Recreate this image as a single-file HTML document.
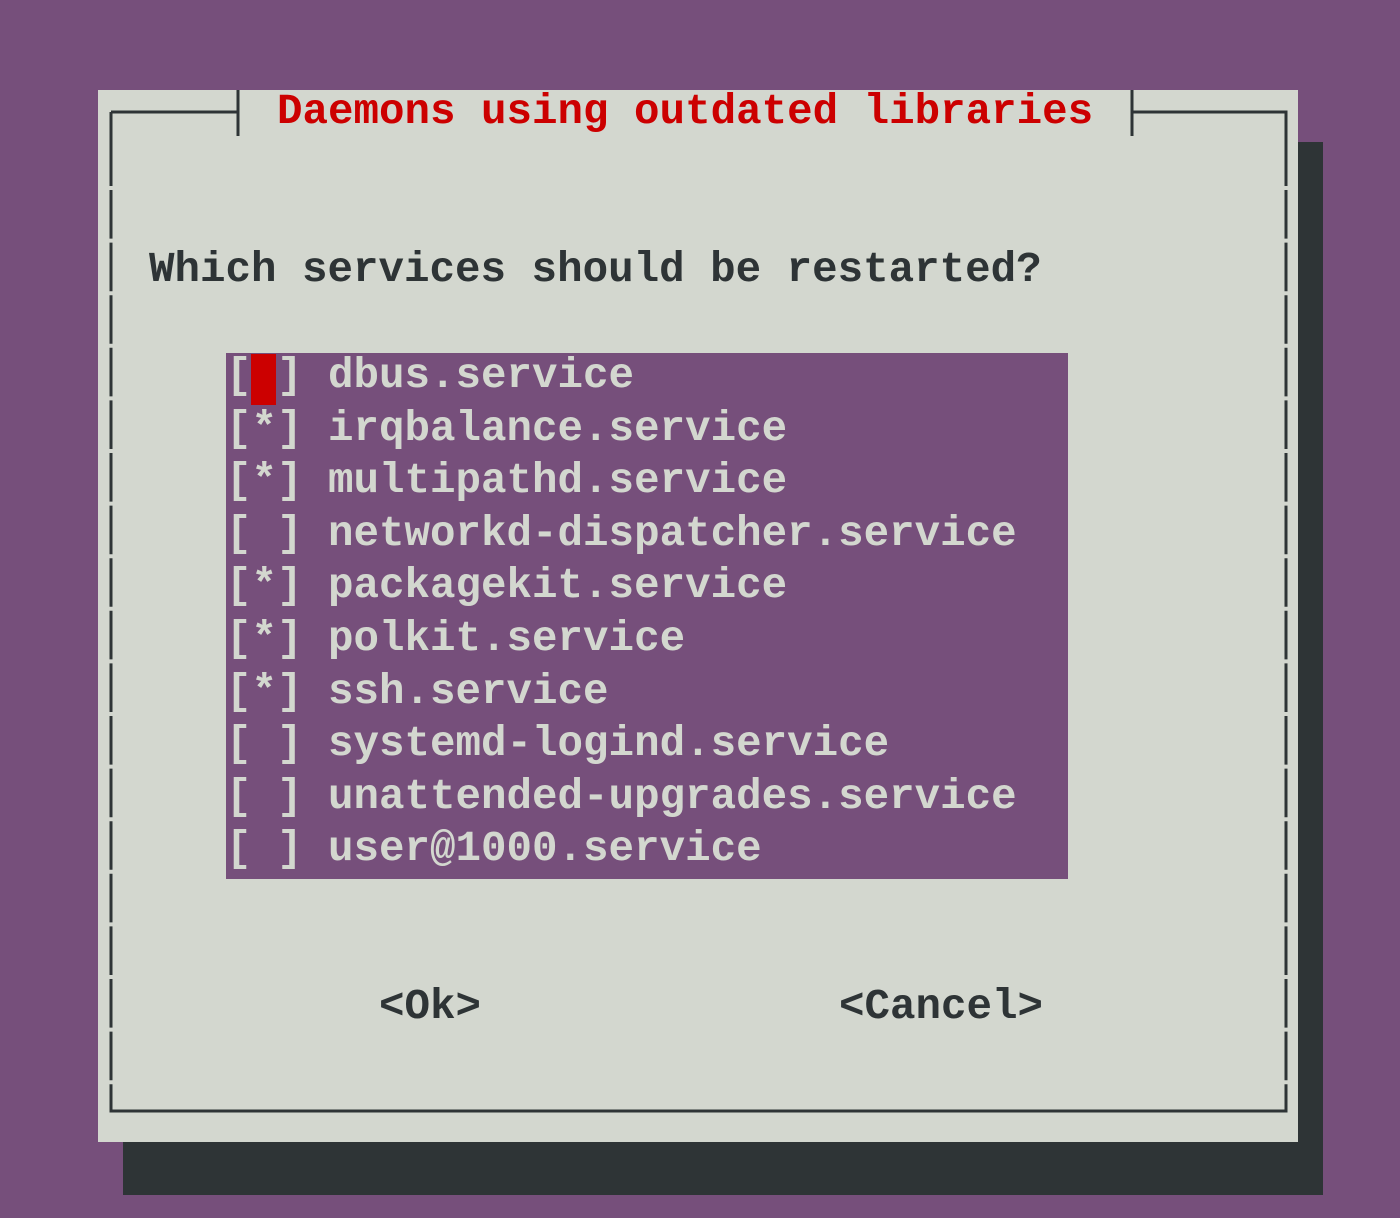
<!DOCTYPE html>
<html><head><style>
body{margin:0;width:1400px;height:1218px;background:#764f7b;position:relative;overflow:hidden;font-family:"Liberation Mono",monospace;font-weight:bold;}
.a{position:absolute;}
.t{position:absolute;font-size:42.5px;line-height:52.6px;white-space:pre;letter-spacing:0;}
</style></head><body>
<div class="a" style="left:123px;top:142px;width:1200px;height:1053px;background:#2e3436"></div>
<div class="a" style="left:98px;top:90px;width:1200px;height:1052px;background:#d3d7cf"></div>
<svg class="a" style="left:0;top:0" width="1400" height="1218">
<g stroke="#2e3436" stroke-width="3" fill="none">
<path d="M111 112 V1111 H1286 V112 H1132"/>
<path d="M111 112 H238"/>
<path d="M238 90 V136 M1132 90 V136"/>
</g>
<g stroke="#d3d7cf" stroke-width="4">
<path d="M111 140 V1100" stroke-dasharray="4 48.6" stroke-dashoffset="-46"/>
<path d="M1286 140 V1100" stroke-dasharray="4 48.6" stroke-dashoffset="-46"/>
</g>
</svg>
<div class="t" style="left:277px;top:86px;color:#cc0000">Daemons using outdated libraries</div>
<div class="t" style="left:149px;top:244px;color:#2e3436">Which services should be restarted?</div>
<div class="a" style="left:226px;top:353px;width:842px;height:526px;background:#764f7b"></div>
<div class="a" style="left:251px;top:354px;width:25px;height:51px;background:#cc0000"></div>
<div class="t" style="left:226px;top:350px;color:#d3d7cf">[ ] dbus.service
[*] irqbalance.service
[*] multipathd.service
[ ] networkd-dispatcher.service
[*] packagekit.service
[*] polkit.service
[*] ssh.service
[ ] systemd-logind.service
[ ] unattended-upgrades.service
[ ] user@1000.service</div>
<div class="t" style="left:379px;top:981px;color:#2e3436">&lt;Ok&gt;</div>
<div class="t" style="left:839px;top:981px;color:#2e3436">&lt;Cancel&gt;</div>
</body></html>
